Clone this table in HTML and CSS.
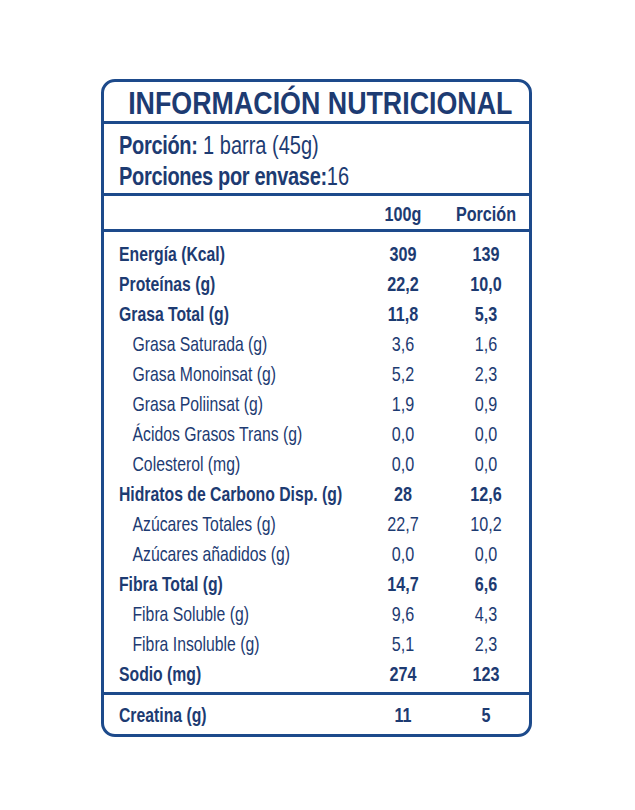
FILE: index.html
```html
<!DOCTYPE html>
<html lang="es">
<head>
<meta charset="utf-8">
<link rel="stylesheet" href="styles.css">
</head>
<body>
<div class="label">
  <div class="title"><span class="t">INFORMACIÓN NUTRICIONAL</span></div>
  <div class="serving">
    <div class="line"><b>Porción:</b> 1 barra (45g)</div>
    <div class="line"><b>Porciones por envase:</b>16</div>
  </div>
  <div class="grid head">
    <span></span><span class="v">100g</span><span class="v">Porción</span>
  </div>
  <div class="grid body">
    <span class="k b">Energía (Kcal)</span><span class="v b">309</span><span class="v b">139</span>
    <span class="k b">Proteínas (g)</span><span class="v b">22,2</span><span class="v b">10,0</span>
    <span class="k b">Grasa Total (g)</span><span class="v b">11,8</span><span class="v b">5,3</span>
    <span class="k s">Grasa Saturada (g)</span><span class="v">3,6</span><span class="v">1,6</span>
    <span class="k s">Grasa Monoinsat (g)</span><span class="v">5,2</span><span class="v">2,3</span>
    <span class="k s">Grasa Poliinsat (g)</span><span class="v">1,9</span><span class="v">0,9</span>
    <span class="k s">Ácidos Grasos Trans (g)</span><span class="v">0,0</span><span class="v">0,0</span>
    <span class="k s">Colesterol (mg)</span><span class="v">0,0</span><span class="v">0,0</span>
    <span class="k b">Hidratos de Carbono Disp. (g)</span><span class="v b">28</span><span class="v b">12,6</span>
    <span class="k s">Azúcares Totales (g)</span><span class="v">22,7</span><span class="v">10,2</span>
    <span class="k s">Azúcares añadidos (g)</span><span class="v">0,0</span><span class="v">0,0</span>
    <span class="k b">Fibra Total (g)</span><span class="v b">14,7</span><span class="v b">6,6</span>
    <span class="k s">Fibra Soluble (g)</span><span class="v">9,6</span><span class="v">4,3</span>
    <span class="k s">Fibra Insoluble (g)</span><span class="v">5,1</span><span class="v">2,3</span>
    <span class="k b">Sodio (mg)</span><span class="v b">274</span><span class="v b">123</span>
  </div>
  <div class="grid foot">
    <span class="k b">Creatina (g)</span><span class="v b">11</span><span class="v b">5</span>
  </div>
</div>
</body>
</html>
```
FILE: styles.css
```css
html, body {
  margin: 0;
  padding: 0;
  background: #ffffff;
}
body {
  font-family: "Liberation Sans", Arial, sans-serif;
  color: #1d3b72;
  padding-top: 79px;
  padding-left: 101px;
}
.label {
  width: 425px;
  border: 3px solid #1d4a8b;
  border-radius: 14px;
}
.title {
  display: flex;
  justify-content: center;
  font-weight: bold;
  font-size: 32px;
  height: 39px;
  line-height: 42px;
  padding-left: 7px;
  border-bottom: 3px solid #1d4a8b;
  white-space: nowrap;
}
.t {
  flex: none;
  transform: scaleX(0.838);
  transform-origin: center;
}
.serving {
  font-size: 25px;
  padding: 6px 0 0 15px;
  height: 63px;
  line-height: 31px;
  border-bottom: 3px solid #1d4a8b;
}
.serving b {
  letter-spacing: -0.4px;
}
.line {
  white-space: nowrap;
  transform: scaleX(0.8);
  transform-origin: left center;
}
.grid {
  display: grid;
  grid-template-columns: minmax(0, 1fr) 80px 86px;
  padding-left: 15px;
}
.head {
  font-size: 21px;
  font-weight: bold;
  height: 33px;
  line-height: 36px;
  border-bottom: 3px solid #1d4a8b;
}
.body {
  font-size: 21px;
  padding-top: 7px;
  padding-bottom: 3px;
  grid-auto-rows: 30px;
  line-height: 30px;
  border-bottom: 3px solid #1d4a8b;
}
.foot {
  font-size: 21px;
  height: 39px;
  line-height: 40px;
}
.grid > span {
  white-space: nowrap;
}
.k {
  transform: scaleX(0.75);
  transform-origin: left center;
}
.v {
  text-align: center;
  transform: scaleX(0.77);
  transform-origin: center;
}
.b {
  font-weight: bold;
}
.s {
  padding-left: 18px;
}
```
